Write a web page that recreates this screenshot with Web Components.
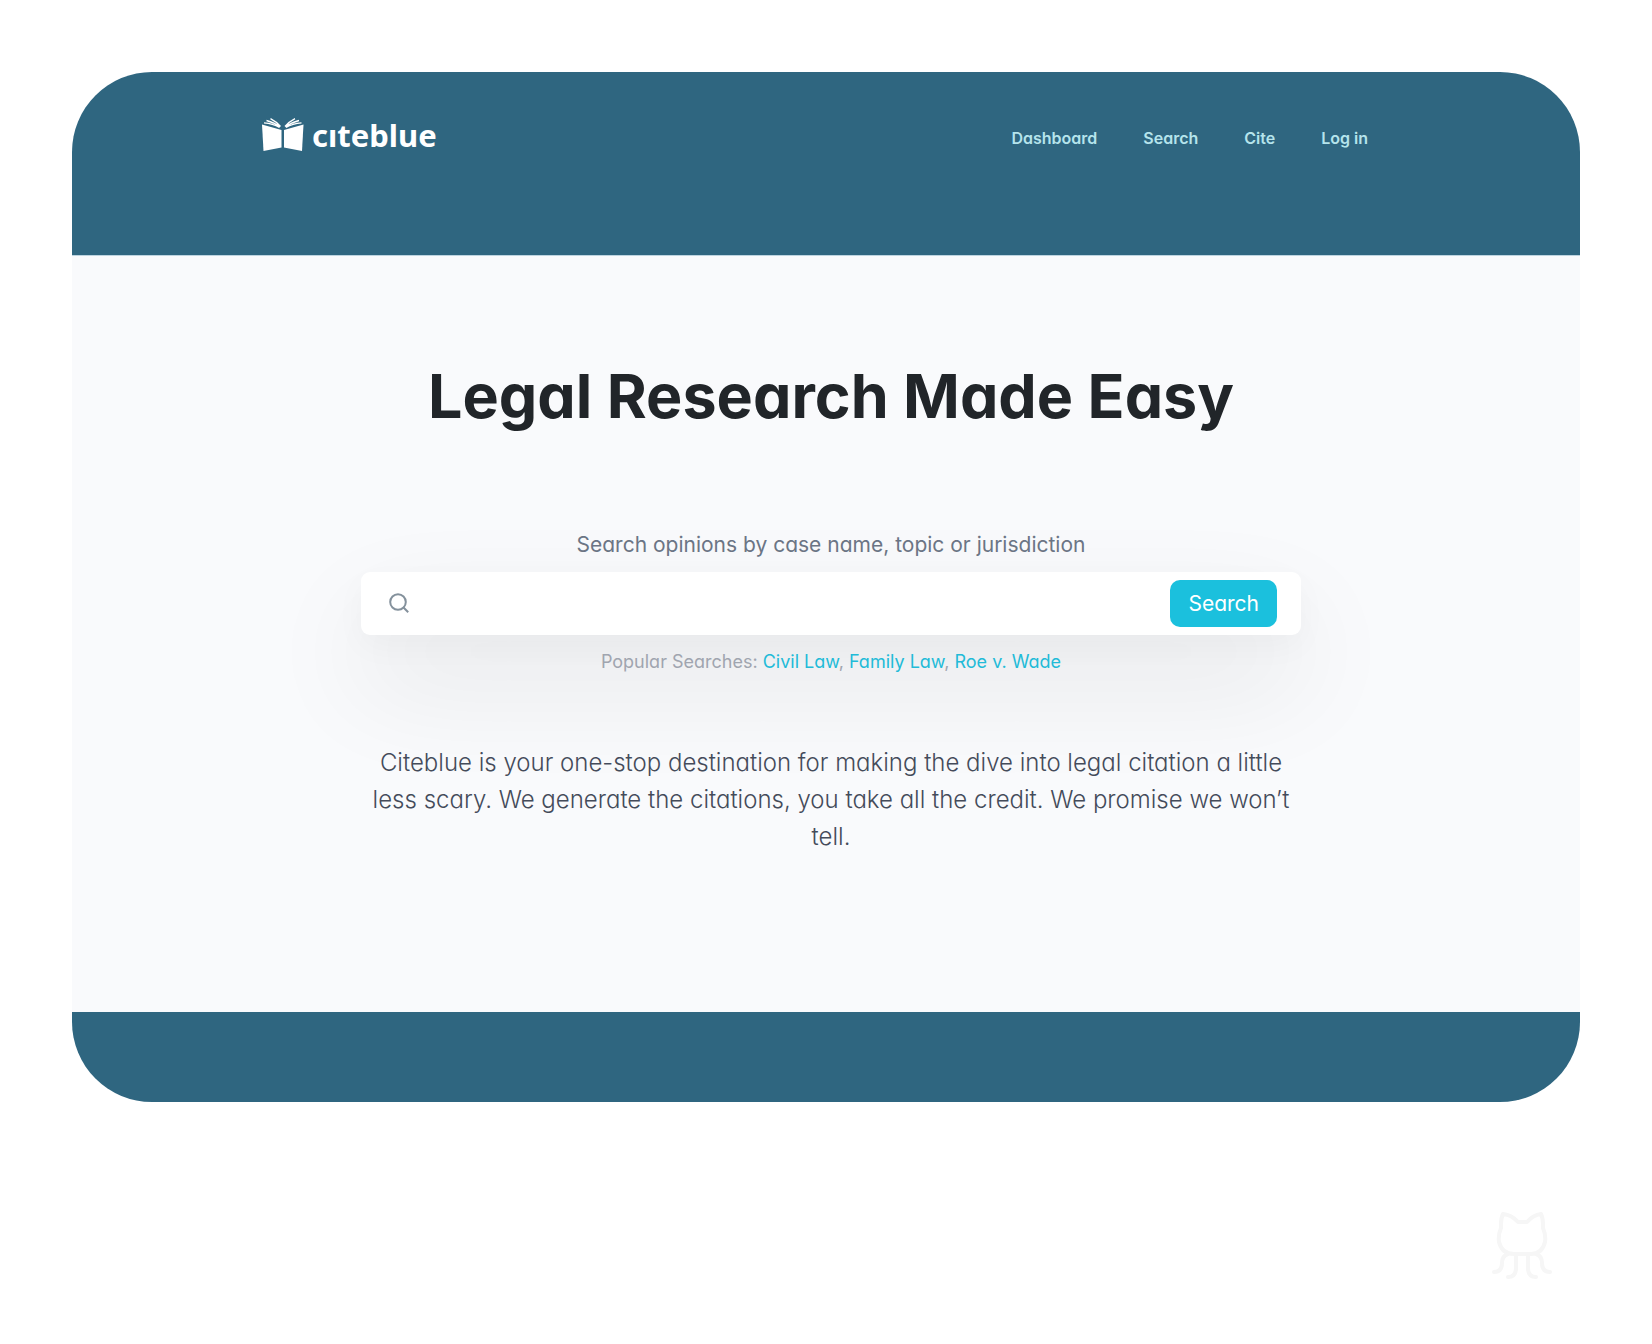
<!DOCTYPE html>
<html lang="en">
<head>
<meta charset="utf-8">
<meta name="viewport" content="width=device-width, initial-scale=1">
<title>Citeblue</title>
<style>
  body {
    margin: 0;
    background: #fff;
    font-family: Inter, "Open Sans", sans-serif;
    font-feature-settings: "cv11" 1;
  }
</style>
</head>
<body>
<cite-page>
  <cite-header slot="header">
    <cite-logo></cite-logo>
    <cite-nav>
      <cite-nav-link href="#dashboard">Dashboard</cite-nav-link>
      <cite-nav-link href="#search">Search</cite-nav-link>
      <cite-nav-link href="#cite">Cite</cite-nav-link>
      <cite-nav-link href="#login">Log in</cite-nav-link>
    </cite-nav>
  </cite-header>
  <cite-hero>
    <span slot="title">Legal Research Made Easy</span>
    <cite-search slot="search"></cite-search>
    <span slot="lead">Citeblue is your one-stop destination for making the dive into legal citation a little less scary. We generate the citations, you take all the credit. We promise we won’t tell.</span>
  </cite-hero>
  <cite-mascot slot="mark"></cite-mascot>
</cite-page>

<script>
const define = (name, html, setup) => {
  const template = document.createElement('template');
  template.innerHTML = html;
  customElements.define(name, class extends HTMLElement {
    constructor() {
      super();
      this.attachShadow({ mode: 'open' }).append(template.content.cloneNode(true));
    }
    connectedCallback() {
      if (setup) setup(this);
    }
  });
};

define('cite-page', `
  <style>
    :host { display: block; padding: 72px 72px 60px; }
    .card { display: flex; flex-direction: column; border-radius: 80px; overflow: hidden; background: #2f6680; }
    main { background: #f9fafc; border-top: 1px solid #bdd4e0; }
    footer { height: 90px; }
    .mark { display: flex; justify-content: flex-end; padding: 104px 24px 0; }
  </style>
  <div class="card">
    <slot name="header"></slot>
    <main><slot></slot></main>
    <footer></footer>
  </div>
  <div class="mark"><slot name="mark"></slot></div>
`);

define('cite-header', `
  <style>
    :host { display: block; }
    header { display: flex; justify-content: space-between; align-items: center; padding: 39px 212px 96px 190px; }
  </style>
  <header><slot></slot></header>
`);

define('cite-logo', `
  <style>
    :host { display: block; }
    a { display: flex; align-items: center; gap: 8px; height: 48px; color: #fff; text-decoration: none; }
    svg { display: block; }
    span { font: 700 31px/32px "Noto Sans", "Open Sans", sans-serif; }
  </style>
  <a href="#home" aria-label="citeblue home">
    <svg width="42" height="34" viewBox="0 0 42 34" fill="#fff" aria-hidden="true">
      <path d="M0 6.500 19.500 12V29.500L1.500 33Z"/>
      <path d="M41.500 6.500 22 12V29.500L40 33Z"/>
      <g fill="none" stroke="#fff" stroke-width="1.300">
        <path d="M2 4.800Q11 5.500 17.500 9.500M4.500 2.500Q12.500 4.500 18 9M8.500 .6Q15 4 18.500 8.500"/>
        <path d="M39.500 4.800Q30.500 5.500 24 9.500M37 2.500Q29 4.500 23.500 9M33 .6Q26.500 4 23 8.500"/>
      </g>
    </svg>
    <span>cıteblue</span>
  </a>
`);

define('cite-nav', `
  <style>
    :host { display: block; }
    nav { display: flex; gap: 46px; padding-top: 6px; }
  </style>
  <nav aria-label="Main"><slot></slot></nav>
`);

define('cite-nav-link', `
  <style>
    :host { display: block; }
    a { display: block; font-size: 16px; font-weight: 600; line-height: 24px; color: #b5e4ec; text-decoration: none; }
  </style>
  <a><slot></slot></a>
`, el => { el.shadowRoot.querySelector('a').href = el.getAttribute('href'); });

define('cite-hero', `
  <style>
    :host { display: block; padding: 104px 24px 157px 34px; text-align: center; }
    h1 { margin: 0 0 99px; font-size: 61px; font-weight: 700; line-height: 72px; color: #212529; }
    .column { max-width: 940px; margin: 0 auto; }
    p { margin: 70px 0 0; font-size: 24px; font-weight: 300; line-height: 37px; color: #444b5a; }
  </style>
  <h1><slot name="title"></slot></h1>
  <div class="column">
    <slot name="search"></slot>
    <p><slot name="lead"></slot></p>
  </div>
`);

define('cite-search', `
  <style>
    :host { display: block; }
    form { display: flex; flex-direction: column; }
    label { margin-bottom: 13px; font-size: 21px; line-height: 28px; color: #6c7686; }
    .bar {
      display: flex; align-items: center; gap: 16px; padding: 8px 24px 8px 27px;
      border-radius: 9px; background: #fff;
      box-shadow: 0 48px 110px rgba(0,0,0,.09), 0 12px 32px rgba(0,0,0,.03);
    }
    svg { flex: none; display: block; }
    input { flex: 1; min-width: 0; height: 40px; border: 0; outline: 0; padding: 0; background: transparent; font: inherit; font-size: 21px; color: #212529; }
    button { height: 47px; padding: 0 18px; border: 0; border-radius: 10px; background: #1bc0dd; color: #fff; font: inherit; font-size: 21px; font-weight: 400; }
    .popular { position: relative; margin-top: 15px; font-size: 18px; line-height: 24px; color: #a0a5af; }
    .popular a { color: #22bbd8; text-decoration: none; }
  </style>
  <form role="search">
    <label for="query">Search opinions by case name, topic or jurisdiction</label>
    <div class="bar">
      <svg width="22" height="22" viewBox="0 0 22 22" fill="none" stroke="#84919c" stroke-width="2" aria-hidden="true">
        <circle cx="10" cy="9" r="7.800"/><path d="M15.500 14.500l4.700 4.700"/>
      </svg>
      <input id="query" type="text" name="q" autocomplete="off">
      <button type="submit">Search</button>
    </div>
    <div class="popular">Popular Searches: <a href="#civil">Civil Law</a>, <a href="#family">Family Law</a>, <a href="#roe">Roe v. Wade</a></div>
  </form>
`);

define('cite-mascot', `
  <style>:host, svg { display: block; }</style>
  <svg width="68" height="76" viewBox="0 0 68 76" fill="none" stroke="#f6f6f6" stroke-width="4" stroke-linecap="round" stroke-linejoin="round" aria-hidden="true">
    <path d="M30 16H39Q45 9 53 8Q55.500 13 55 22Q58 29 57 36Q54 48 43 48H26Q14 48 11 36Q10 29 13 22Q12.500 13 15 8Q24 9 30 16Z"/>
    <path d="M28 49V62Q28 71 20 71M40 49V62Q40 71 48 71M20 48Q14 50 14 57Q14 66 6 66M48 48Q54 50 54 57Q54 66 62 66"/>
  </svg>
`);
</script>
</body>
</html>
